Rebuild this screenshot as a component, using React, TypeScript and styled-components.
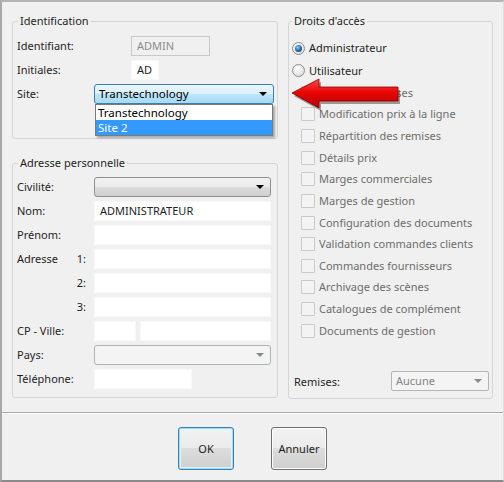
import React from "react";
import styled, { createGlobalStyle, css } from "styled-components";

const GlobalStyle = createGlobalStyle`
  html, body { margin: 0; padding: 0; background: #f0f0f0; }
  body { font-family: "Noto Sans", "DejaVu Sans", sans-serif; }
  * { box-sizing: border-box; }
`;

const Window = styled.div`
  position: relative;
  width: 504px;
  height: 482px;
  background: #f0f0f0;
  border-top: 2px solid #b4b4b4;
  border-left: 2px solid #a8a8a8;
  border-right: 1px solid #dedede;
  border-bottom: 2px solid #8a8a8a;
  display: flex;
  flex-direction: column;
  font-family: "Noto Sans", "DejaVu Sans", sans-serif;
  font-size: 11px;
  color: #1e1e1e;
`;

const Main = styled.div`
  flex: 1;
  display: flex;
  gap: 10px;
  padding: 12px 10px 13px 10px;
`;

const LeftColumn = styled.div`
  width: 266px;
  display: flex;
  flex-direction: column;
  gap: 17px;
`;

const Group = styled.fieldset<{ $pl: number; $pr: number; $pt: number; $pb: number }>`
  margin: 0;
  min-width: 0;
  border: 1px solid #d3d6d9;
  border-radius: 3px;
  padding: ${(p) => `${p.$pt}px ${p.$pr}px ${p.$pb}px ${p.$pl}px`};
`;

const RightGroup = styled(Group)`
  width: 205px;
  display: flex;
  flex-direction: column;
`;

const Legend = styled.legend<{ $ml: number }>`
  padding: 0 2px;
  margin-left: ${(p) => p.$ml}px;
  font-size: 11px;
  line-height: 14px;
  color: #1e1e1e;
`;

const Rows = styled.div`
  display: flex;
  flex-direction: column;
  gap: 4px;
`;

const Row = styled.div`
  display: grid;
  grid-template-columns: 77px 1fr;
  align-items: center;
  height: 20px;
`;

const Label = styled.div`
  display: flex;
  justify-content: space-between;
  padding-right: 8px;
  white-space: nowrap;
  line-height: 14px;
`;

const Fields = styled.div<{ $offset?: number }>`
  display: flex;
  gap: 4px;
  height: 20px;
  margin-left: ${(p) => p.$offset ?? 0}px;
`;

const TextBox = styled.div<{ $w: number; $disabled?: boolean }>`
  width: ${(p) => p.$w}px;
  height: 20px;
  padding: 0 5px;
  line-height: 18px;
  white-space: nowrap;
  ${(p) =>
    p.$disabled
      ? css`
          background: #f0f0f0;
          border: 1px solid #c9c9c9;
          color: #8d8d8d;
        `
      : css`
          background: #ffffff;
          border: 1px solid #f9f9f9;
          color: #1e1e1e;
        `}
`;

const SelectBox = styled.div<{ $w: number; $variant: "open" | "normal" | "disabled" | "flat" }>`
  position: relative;
  width: ${(p) => p.$w}px;
  height: 20px;
  border-radius: 3px;
  padding: 0 4px;
  line-height: 18px;
  display: flex;
  align-items: center;
  justify-content: space-between;
  ${(p) =>
    p.$variant === "open"
      ? css`
          border: 1px solid #3c7fb1;
          background: linear-gradient(#eaf6fd 0%, #d9f0fc 50%, #bee6fd 50%, #a7d9f5 100%);
          color: #000;
        `
      : p.$variant === "normal"
      ? css`
          border: 1px solid #8e8f8f;
          background: linear-gradient(#f2f2f2 0%, #ebebeb 50%, #dddddd 50%, #cfcfcf 100%);
          color: #000;
        `
      : p.$variant === "disabled"
      ? css`
          border: 1px solid #adb2b5;
          background: #f4f4f4;
          color: #838383;
        `
      : css`
          border: 1px solid #b5b5b5;
          border-radius: 2px;
          background: #f4f4f4;
          color: #838383;
        `}
`;

const Caret = styled.span<{ $dim?: boolean }>`
  width: 0;
  height: 0;
  margin-right: 2px;
  border-left: 4px solid transparent;
  border-right: 4px solid transparent;
  border-top: 4px solid ${(p) => (p.$dim ? "#8a8a8a" : "#000")};
`;

const DropList = styled.div`
  position: absolute;
  left: 0;
  top: 19px;
  width: 178px;
  background: #fff;
  border: 1px solid #7a7a7a;
  box-shadow: 2px 2px 2px rgba(0, 0, 0, 0.3);
  z-index: 2;
`;

const DropItem = styled.div<{ $selected?: boolean }>`
  height: 15px;
  line-height: 15px;
  padding-left: 2px;
  font-size: 11.5px;
  color: ${(p) => (p.$selected ? "#fff" : "#000")};
  background: ${(p) => (p.$selected ? "#3399ff" : "transparent")};
`;

const SelectText = styled.span`
  font-size: 11.5px;
`;

const OptionRow = styled.div<{ $h: number; $indent?: number }>`
  height: ${(p) => p.$h}px;
  display: flex;
  align-items: center;
  gap: 4px;
  padding-left: ${(p) => p.$indent ?? 0}px;
`;

const Radio = styled.span<{ $checked?: boolean }>`
  position: relative;
  width: 13px;
  height: 13px;
  border-radius: 50%;
  border: 1px solid #8e8f8f;
  background: radial-gradient(circle at 40% 35%, #ffffff, #e6e6e6 60%, #cfcfcf);
  flex: none;
  ${(p) =>
    p.$checked &&
    css`
      &::after {
        content: "";
        position: absolute;
        left: 2px;
        top: 2px;
        width: 7px;
        height: 7px;
        border-radius: 50%;
        background: radial-gradient(circle at 40% 35%, #8fd4f7 0%, #2a77b3 45%, #0c2f52 100%);
      }
    `}
`;

const Check = styled.span`
  width: 14px;
  height: 14px;
  border: 1px solid #cacaca;
  border-radius: 1px;
  background: #f3f3f3;
  flex: none;
`;

const OptionText = styled.span<{ $dim?: boolean }>`
  color: ${(p) => (p.$dim ? "#6d6d6d" : "#1e1e1e")};
  white-space: nowrap;
  line-height: 14px;
`;

const RemisesRow = styled.div`
  margin-top: auto;
  display: grid;
  grid-template-columns: 99px 1fr;
  align-items: center;
  height: 20px;
`;

const RemisesLabel = styled.span`
  padding-left: 2px;
`;

const Footer = styled.div`
  height: 68px;
  border-top: 1px solid #a9a9a9;
  box-shadow: inset 0 1px 0 #ffffff;
  display: flex;
  justify-content: center;
  align-items: flex-start;
  gap: 37px;
  padding-top: 14px;
`;

const Button = styled.button<{ $default?: boolean }>`
  width: 56px;
  height: 43px;
  border-radius: 3px;
  font-family: inherit;
  font-size: 11px;
  color: #1e1e1e;
  padding: 0;
  border: 1px solid ${(p) => (p.$default ? "#3c7fb1" : "#707070")};
  background: linear-gradient(#f2f2f2 0%, #ebebeb 50%, #dddddd 50%, #cfcfcf 100%);
  box-shadow: ${(p) =>
    p.$default ? "inset 0 0 0 1px #9fdcf5, inset 0 0 0 2px #dff3fc" : "inset 0 0 0 1px #fcfcfc"};
`;

const ArrowSvg = styled.svg`
  position: absolute;
  left: 286px;
  top: 72px;
  z-index: 3;
`;

const Arrow = () => (
  <ArrowSvg width="116" height="40" viewBox="0 0 116 40">
    <defs>
      <linearGradient id="arrowFill" x1="0" y1="0" x2="0" y2="1">
        <stop offset="0" stopColor="#ff4a4a" />
        <stop offset="0.45" stopColor="#ec0606" />
        <stop offset="1" stopColor="#b00000" />
      </linearGradient>
    </defs>
    <polygon
      points="6,22 33,8 33,16 112,16 112,30 33,30 33,37"
      fill="rgba(60,40,40,0.45)"
    />
    <polygon
      points="4,19 31,5 31,13 110,13 110,27 31,27 31,34"
      fill="url(#arrowFill)"
      stroke="#8a0000"
      strokeWidth="0.8"
    />
  </ArrowSvg>
);

const rights = [
  "Accès aux remises",
  "Modification prix à la ligne",
  "Répartition des remises",
  "Détails prix",
  "Marges commerciales",
  "Marges de gestion",
  "Configuration des documents",
  "Validation commandes clients",
  "Commandes fournisseurs",
  "Archivage des scènes",
  "Catalogues de complément",
  "Documents de gestion",
];

export default function App() {
  return (
    <>
      <GlobalStyle />
      <Window>
        <Main>
          <LeftColumn>
            <Group $pl={4} $pr={3} $pt={8} $pb={34}>
              <Legend $ml={1}>Identification</Legend>
              <Rows>
                <Row>
                  <Label>Identifiant:</Label>
                  <Fields $offset={37}>
                    <TextBox $w={79} $disabled>ADMIN</TextBox>
                  </Fields>
                </Row>
                <Row>
                  <Label>Initiales:</Label>
                  <Fields $offset={37}>
                    <TextBox $w={28}>AD</TextBox>
                  </Fields>
                </Row>
                <Row>
                  <Label>Site:</Label>
                  <Fields>
                    <SelectBox $w={180} $variant="open">
                      <SelectText>Transtechnology</SelectText>
                      <Caret />
                      <DropList>
                        <DropItem>Transtechnology</DropItem>
                        <DropItem $selected>Site 2</DropItem>
                      </DropList>
                    </SelectBox>
                  </Fields>
                </Row>
              </Rows>
            </Group>
            <Group $pl={4} $pr={6} $pt={7} $pb={8}>
              <Legend $ml={1}>Adresse personnelle</Legend>
              <Rows>
                <Row>
                  <Label>Civilité:</Label>
                  <Fields>
                    <SelectBox $w={177} $variant="normal">
                      <span />
                      <Caret />
                    </SelectBox>
                  </Fields>
                </Row>
                <Row>
                  <Label>Nom:</Label>
                  <Fields>
                    <TextBox $w={177}>ADMINISTRATEUR</TextBox>
                  </Fields>
                </Row>
                <Row>
                  <Label>Prénom:</Label>
                  <Fields>
                    <TextBox $w={177} />
                  </Fields>
                </Row>
                <Row>
                  <Label>
                    <span>Adresse</span>
                    <span>1:</span>
                  </Label>
                  <Fields>
                    <TextBox $w={177} />
                  </Fields>
                </Row>
                <Row>
                  <Label>
                    <span />
                    <span>2:</span>
                  </Label>
                  <Fields>
                    <TextBox $w={177} />
                  </Fields>
                </Row>
                <Row>
                  <Label>
                    <span />
                    <span>3:</span>
                  </Label>
                  <Fields>
                    <TextBox $w={177} />
                  </Fields>
                </Row>
                <Row>
                  <Label>CP - Ville:</Label>
                  <Fields>
                    <TextBox $w={42} />
                    <TextBox $w={131} />
                  </Fields>
                </Row>
                <Row>
                  <Label>Pays:</Label>
                  <Fields>
                    <SelectBox $w={177} $variant="disabled">
                      <span />
                      <Caret $dim />
                    </SelectBox>
                  </Fields>
                </Row>
                <Row>
                  <Label>Téléphone:</Label>
                  <Fields>
                    <TextBox $w={98} />
                  </Fields>
                </Row>
              </Rows>
            </Group>
          </LeftColumn>
          <RightGroup $pl={3} $pr={3} $pt={9} $pb={7}>
            <Legend $ml={0}>Droits d'accès</Legend>
            <OptionRow $h={22}>
              <Radio $checked />
              <OptionText>Administrateur</OptionText>
            </OptionRow>
            <OptionRow $h={23}>
              <Radio />
              <OptionText>Utilisateur</OptionText>
            </OptionRow>
            {rights.map((r) => (
              <OptionRow key={r} $h={21.64} $indent={9}>
                <Check />
                <OptionText $dim>{r}</OptionText>
              </OptionRow>
            ))}
            <RemisesRow>
              <RemisesLabel>Remises:</RemisesLabel>
              <SelectBox $w={98} $variant="flat">
                <span>Aucune</span>
                <Caret $dim />
              </SelectBox>
            </RemisesRow>
          </RightGroup>
        </Main>
        <Footer>
          <Button $default>OK</Button>
          <Button>Annuler</Button>
        </Footer>
        <Arrow />
      </Window>
    </>
  );
}
